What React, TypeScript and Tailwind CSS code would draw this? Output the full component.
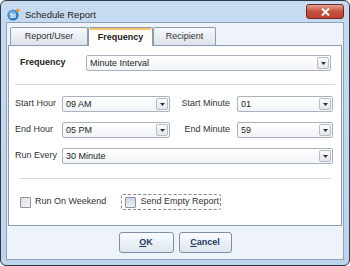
import React from "react";

const font = { fontFamily: '"Liberation Sans", Arial, sans-serif' };

function Select({ value, width }: { value: string; width: string }) {
  return (
    <div
      className={`${width} h-[16px] flex items-center justify-between border border-[#a9b3bf] rounded-[2px] bg-gradient-to-b from-white to-[#f1f3f6] pl-[3px] pr-[1px]`}
    >
      <span className="text-[9px] text-[#222] leading-none">{value}</span>
      <div className="w-[12px] h-[12px] flex items-center justify-center border border-[#b4bcc7] rounded-[2px] bg-gradient-to-b from-[#fbfcfd] to-[#e3e7ec]">
        <svg width="5" height="3" viewBox="0 0 5 3">
          <path d="M0 0H5L2.5 3Z" fill="#333" />
        </svg>
      </div>
    </div>
  );
}

function Checkbox() {
  return (
    <div className="w-[11px] h-[11px] shrink-0 border border-[#8f959d] rounded-[1px] bg-gradient-to-br from-[#d9dde2] to-[#f7f8f9]" />
  );
}

export default function App() {
  return (
    <div
      className="w-[350px] h-[266px] rounded-[6px] border border-[#2e3a47] bg-gradient-to-b from-[#c6dbf1] to-[#bdd4ec] flex flex-col select-none"
      style={font}
    >
      {/* Title bar */}
      <div className="h-[21px] flex items-start relative">
        <div className="ml-[6px] mt-[7px] relative w-[13px] h-[13px]">
          <svg width="13" height="13" viewBox="0 0 13 13">
            <defs>
              <radialGradient id="g" cx="0.4" cy="0.35" r="0.7">
                <stop offset="0" stopColor="#7fc3f0" />
                <stop offset="1" stopColor="#1763b0" />
              </radialGradient>
            </defs>
            <circle cx="6" cy="7" r="5.6" fill="url(#g)" />
            <text x="3" y="10" fontSize="6.5" fontWeight="bold" fill="#fff" fontFamily="Liberation Sans">
              bi
            </text>
            <circle cx="10.8" cy="2.2" r="1.8" fill="#f29a2e" />
          </svg>
        </div>
        <span className="ml-[5px] mt-[9px] text-[9.5px] text-[#1b1b1b] leading-none">Schedule Report</span>
        <div className="absolute right-[5px] top-[3px] w-[38px] h-[15px] rounded-[3px] border border-[#6b2a23] bg-gradient-to-b from-[#e3a193] via-[#c6503c] to-[#c0402d] flex items-center justify-center">
          <svg width="9" height="8" viewBox="0 0 9 8">
            <path d="M1 0.5L8 7.5M8 0.5L1 7.5" stroke="#fff" strokeWidth="2" />
          </svg>
        </div>
      </div>

      {/* Client area */}
      <div className="mx-[5px] h-[238px] border border-[#8fa3bb] bg-[#eef3fa] flex flex-col px-[1px]">
        {/* Tabs */}
        <div className="h-[22px] flex items-end pl-[2px]">
          <div className="w-[78px] h-[18px] border border-b-0 border-[#8c9cb0] rounded-t-[2px] bg-gradient-to-b from-[#f8f9fb] to-[#dde3ea] flex items-center justify-center text-[9px] text-[#333]">
            Report/User
          </div>
          <div className="w-[65px] h-[19px] border border-b-0 border-[#8c9cb0] rounded-t-[2px] bg-gradient-to-b from-[#fffaf0] to-white flex flex-col -mb-px relative z-10">
            <div className="h-[2px] bg-[#f7c66e] mx-[1px]" />
            <div className="flex-1 flex items-center justify-center text-[9px] font-bold text-[#222] pb-[1px]">
              Frequency
            </div>
          </div>
          <div className="w-[63px] h-[18px] border border-b-0 border-[#8c9cb0] rounded-t-[2px] bg-gradient-to-b from-[#f8f9fb] to-[#dde3ea] flex items-center justify-center text-[9px] text-[#333]">
            Recipient
          </div>
        </div>

        {/* Panel */}
        <div className="h-[181px] border border-[#8c9cb0] bg-white flex flex-col">
          <div className="mt-[9px] flex items-center">
            <span className="ml-[11px] w-[66px] text-[9px] font-bold text-[#222]">Frequency</span>
            <Select value="Minute Interval" width="w-[245px]" />
          </div>

          <div className="mt-[13px] mx-[6px] h-px bg-[#d5dbe3]" />

          <div className="mt-[11px] flex items-center">
            <span className="ml-[6px] w-[47px] text-[9px] text-[#333]">Start Hour</span>
            <Select value="09 AM" width="w-[108px]" />
            <span className="w-[67px] pr-[7px] text-right text-[9px] text-[#333]">Start Minute</span>
            <Select value="01" width="w-[96px]" />
          </div>

          <div className="mt-[10px] flex items-center">
            <span className="ml-[6px] w-[47px] text-[9px] text-[#333]">End Hour</span>
            <Select value="05 PM" width="w-[108px]" />
            <span className="w-[67px] pr-[7px] text-right text-[9px] text-[#333]">End Minute</span>
            <Select value="59" width="w-[96px]" />
          </div>

          <div className="mt-[10px] flex items-center">
            <span className="ml-[6px] w-[47px] text-[9px] text-[#333]">Run Every</span>
            <Select value="30 Minute" width="w-[271px]" />
          </div>

          <div className="mt-[14px] mx-[10px] h-px bg-[#d5dbe3]" />

          <div className="mt-[15px] flex items-center">
            <div className="ml-[11px] flex items-center gap-[4px]">
              <Checkbox />
              <span className="text-[9px] text-[#333] whitespace-nowrap">Run On Weekend</span>
            </div>
            <div className="ml-[15px] w-[100px] h-[16px] border border-dashed border-[#8a8a8a] rounded-[2px] flex items-center gap-[4px] pl-[3px]">
              <div className="w-[11px] h-[11px] shrink-0 border border-[#8f959d] rounded-[1px] bg-gradient-to-b from-[#c9d6e6] to-[#eef2f7]" />
              <span className="text-[9px] text-[#333] whitespace-nowrap">Send Empty Report</span>
            </div>
          </div>
        </div>

        {/* Buttons */}
        <div className="flex-1 flex items-center justify-center gap-[5px]">
          <div className="w-[55px] h-[21px] border border-[#7d8fa5] rounded-[3px] bg-gradient-to-b from-[#f9fbfe] to-[#dfe6ef] flex flex-col px-[2px]">
            <div className="mt-[3px] h-[1px] bg-[#f3c25a]" />
            <div className="flex-1 flex items-center justify-center text-[9px] font-bold text-[#1d3a5e] pb-[3px]">
              <span>
                <span className="underline">O</span>K
              </span>
            </div>
          </div>
          <div className="w-[53px] h-[21px] border border-[#7d8fa5] rounded-[3px] bg-gradient-to-b from-[#f9fbfe] to-[#dfe6ef] flex items-center justify-center text-[9px] font-bold text-[#1d3a5e]">
            <span>
              <span className="underline">C</span>ancel
            </span>
          </div>
        </div>
      </div>
    </div>
  );
}
